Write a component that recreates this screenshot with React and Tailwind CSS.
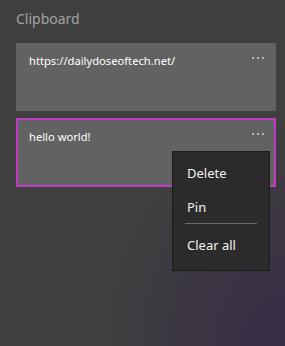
import React from 'react';

const clips = [
    { id: 1, text: 'https://dailydoseoftech.net/', selected: false },
    { id: 2, text: 'hello world!', selected: true },
];

const Dots = () => (
    <div className="flex gap-[3px] pt-[4px]">
        <span className="block w-[2px] h-[2px] bg-[#b8b8b8]" />
        <span className="block w-[2px] h-[2px] bg-[#b8b8b8]" />
        <span className="block w-[2px] h-[2px] bg-[#b8b8b8]" />
    </div>
);

const ClipItem = ({ clip }) => (
    <div
        className={
            clip.selected
                ? 'flex justify-between h-[69px] bg-[#626262] border-2 border-[#c23bc4] pl-[11px] pr-[10px] pt-[9px]'
                : 'flex justify-between h-[68px] bg-[#626262] pl-[13px] pr-[12px] pt-[10px]'
        }
    >
        <span className="text-[11.2px] leading-[16px] text-white">{clip.text}</span>
        <Dots />
    </div>
);

const ContextMenu = () => (
    <div className="absolute left-[172px] top-[151px] w-[98px] h-[120px] bg-[#2b2b2b] border border-[#1c1c1c] text-[#f2f2f2] text-[13px] pt-[11px]">
        <div className="pl-[14px] h-[34px] leading-[20px]">Delete</div>
        <div className="pl-[14px] h-[26px] leading-[20px]">Pin</div>
        <div className="mx-[12px] h-px bg-[#6a6a6a]" />
        <div className="pl-[14px] pt-[11px] leading-[20px]">Clear all</div>
    </div>
);

const App = () => {
    return (
        <div
            className="relative w-[285px] h-[346px] overflow-hidden bg-[#3f3f3f]"
            style={{ fontFamily: '"Noto Sans", "Open Sans", sans-serif' }}
        >
            <div className="absolute inset-0 bg-[radial-gradient(ellipse_at_100%_100%,#382c47_0%,rgba(56,44,71,0)_45%)]" />
            <div className="relative pl-4 pr-[9px] pt-[9px]">
                <h1 className="text-[14px] leading-[20px] text-[#a3a3a3] mb-[14px]">Clipboard</h1>
                <div className="flex flex-col gap-[7px]">
                    {clips.map((clip) => (
                        <ClipItem key={clip.id} clip={clip} />
                    ))}
                </div>
            </div>
            <ContextMenu />
        </div>
    );
};

export default App;
